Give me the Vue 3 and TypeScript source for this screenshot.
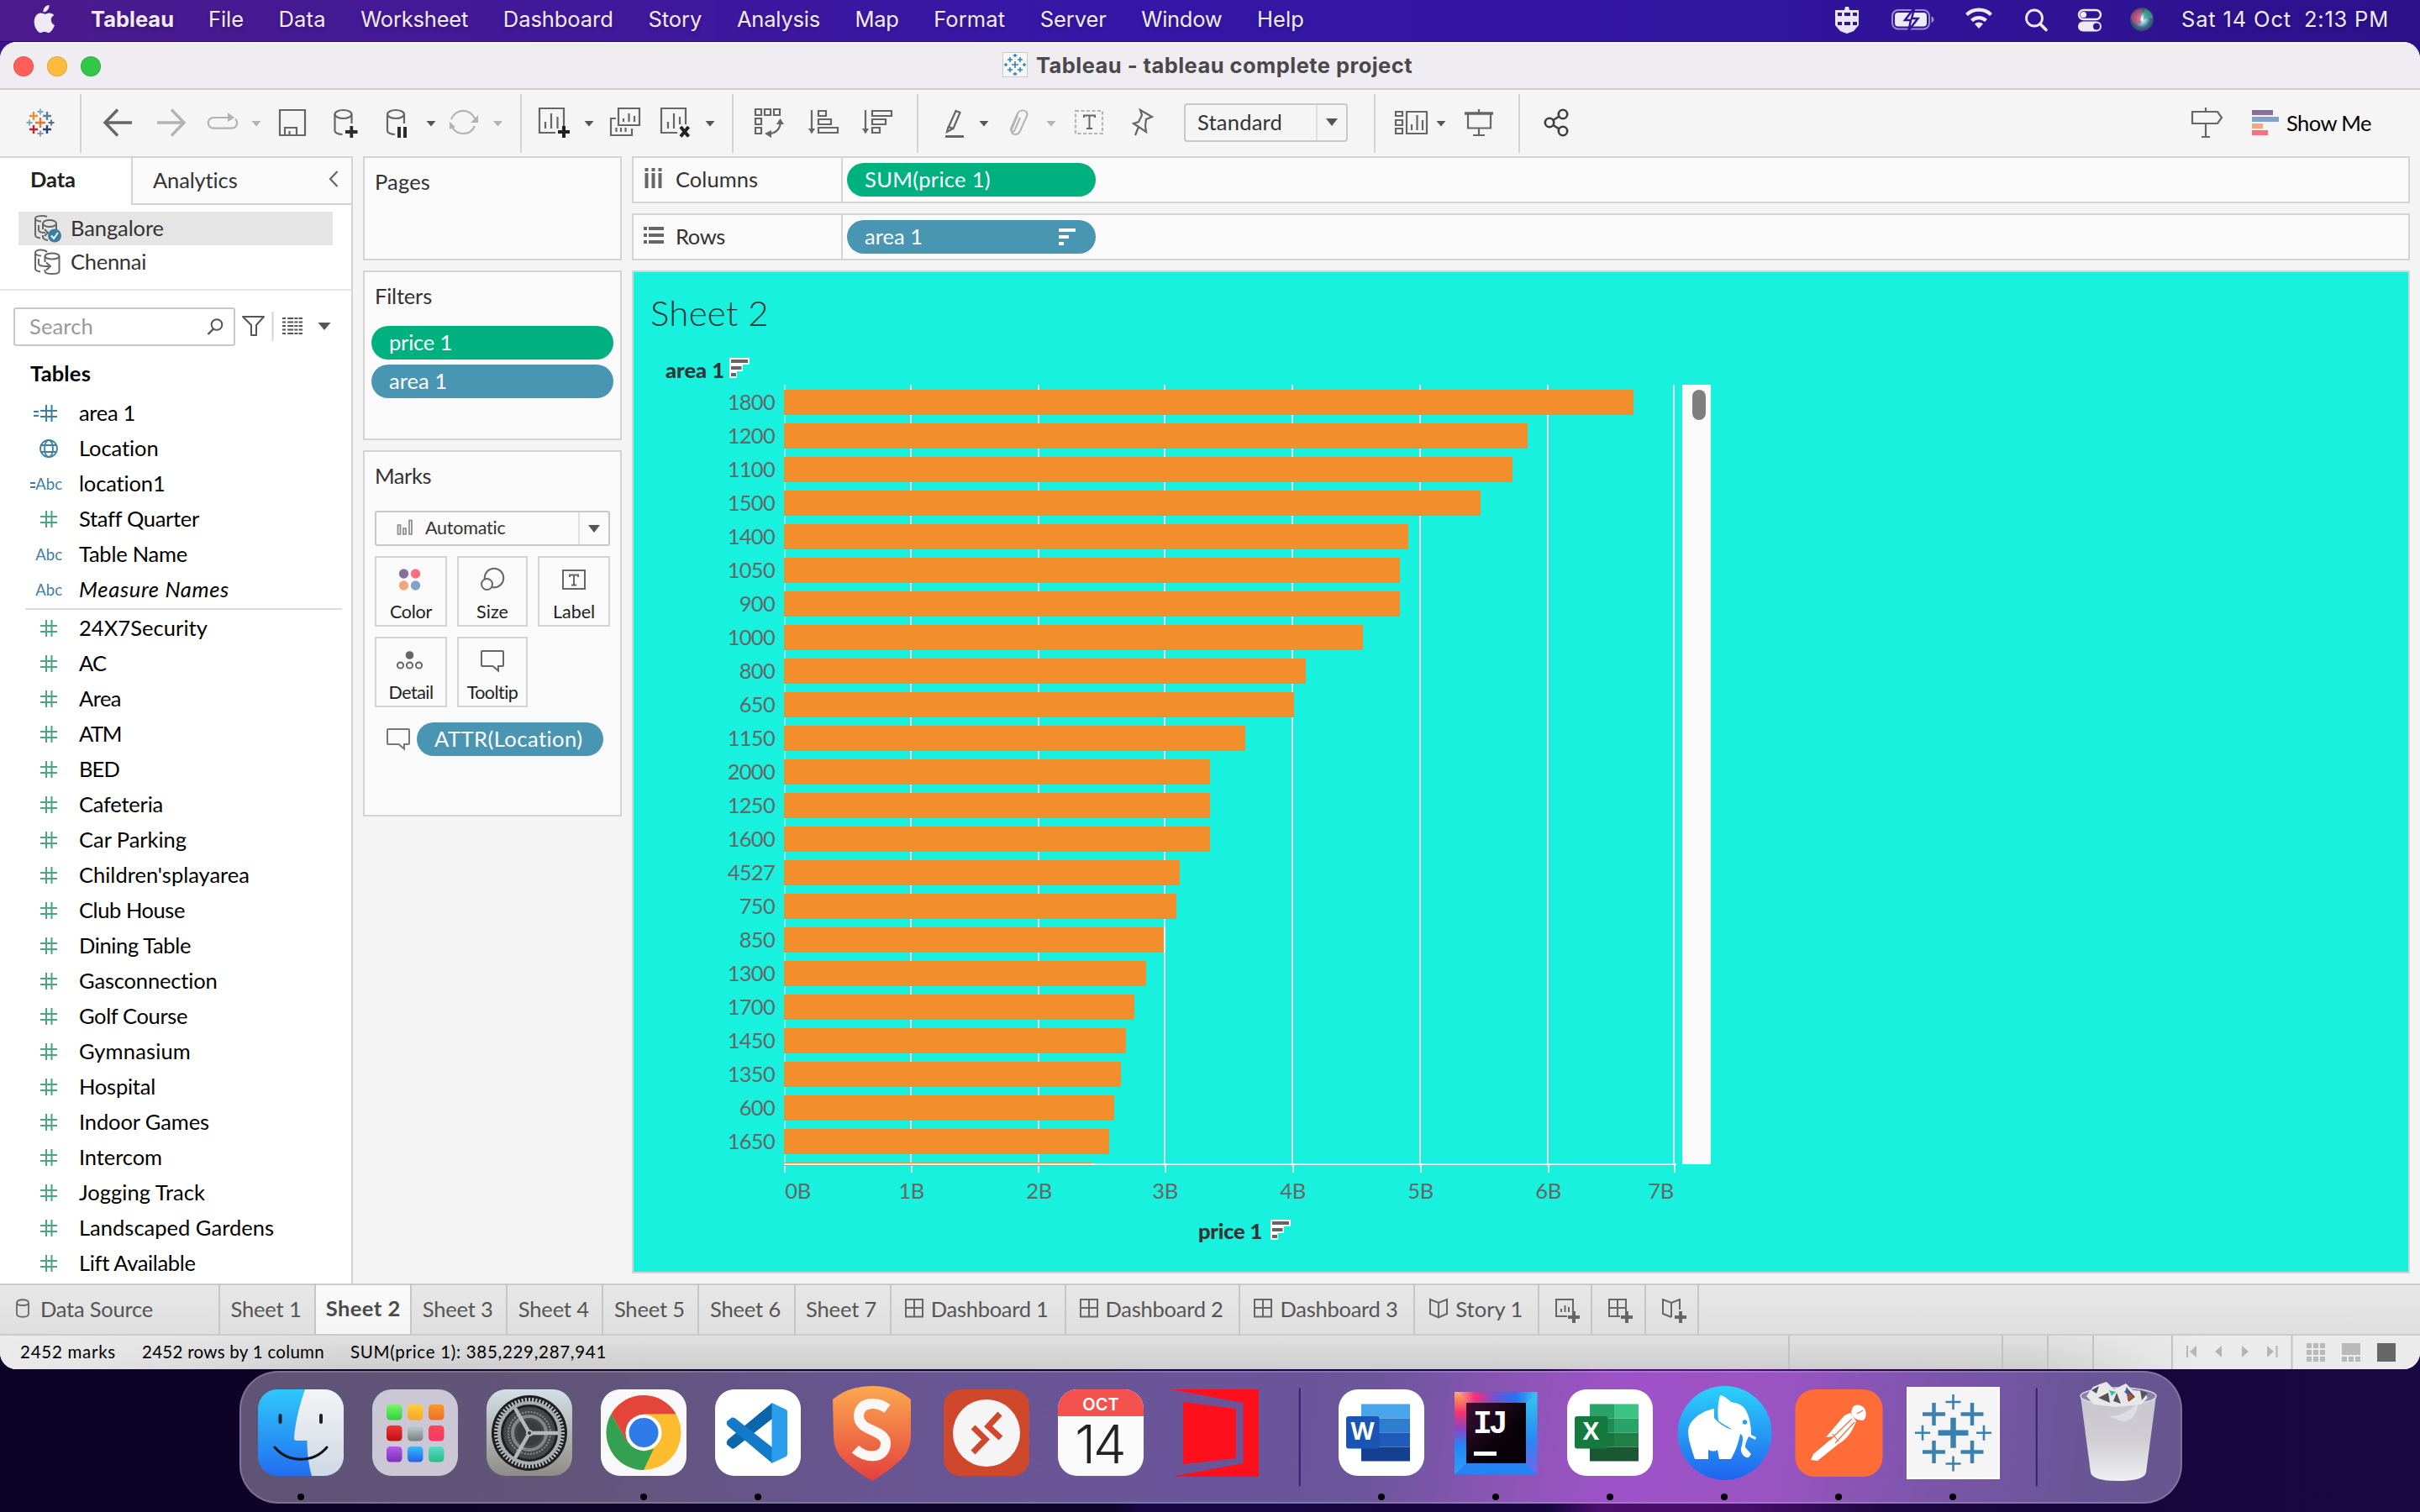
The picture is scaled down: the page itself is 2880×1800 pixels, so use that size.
<script setup lang="ts">
import type { Directive } from 'vue'

// Tracks a label's letters so that it occupies exactly the given width.
const vFit: Directive<HTMLElement, number> = {
  mounted(el, { value }) {
    const natural = el.getBoundingClientRect().width
    const count = (el.textContent ?? '').trim().length
    el.style.letterSpacing = `${(value - natural) / count}px`
  },
}

type Kind = 'calc-num' | 'globe' | 'calc-abc' | 'abc' | 'num'
interface Field { name: string; w: number; kind: Kind; italic?: boolean }
interface Label { text: string; w: number }

const menus: Label[] = [
  { text: 'File', w: 42 }, { text: 'Data', w: 56 }, { text: 'Worksheet', w: 128 },
  { text: 'Dashboard', w: 131 }, { text: 'Story', w: 64 }, { text: 'Analysis', w: 99 },
  { text: 'Map', w: 52 }, { text: 'Format', w: 85 }, { text: 'Server', w: 79 },
  { text: 'Window', w: 96 }, { text: 'Help', w: 56 },
]

const dimensions: Field[] = [
  { name: 'area 1', w: 67, kind: 'calc-num' },
  { name: 'Location', w: 95, kind: 'globe' },
  { name: 'location1', w: 103, kind: 'calc-abc' },
  { name: 'Staff Quarter', w: 142, kind: 'num' },
  { name: 'Table Name', w: 129, kind: 'abc' },
  { name: 'Measure Names', w: 179, kind: 'abc', italic: true },
]

const measures: Field[] = ([
  ['24X7Security', 153], ['AC', 32], ['Area', 50], ['ATM', 50], ['BED', 48], ['Cafeteria', 100],
  ['Car Parking', 128], ["Children'splayarea", 203], ['Club House', 126], ['Dining Table', 133],
  ['Gasconnection', 165], ['Golf Course', 129], ['Gymnasium', 133], ['Hospital', 91],
  ['Indoor Games', 155], ['Intercom', 99], ['Jogging Track', 150], ['Landscaped Gardens', 232],
  ['Lift Available', 138],
] as [string, number][]).map(([name, w]) => ({ name, w, kind: 'num' as Kind }))

const bars: { area: string; w: number }[] = [
  { area: '1800', w: 1011 }, { area: '1200', w: 885 }, { area: '1100', w: 867 }, { area: '1500', w: 829 },
  { area: '1400', w: 743 }, { area: '1050', w: 733 }, { area: '900', w: 733 }, { area: '1000', w: 689 },
  { area: '800', w: 621 }, { area: '650', w: 607 }, { area: '1150', w: 549 }, { area: '2000', w: 507 },
  { area: '1250', w: 507 }, { area: '1600', w: 507 }, { area: '4527', w: 471 }, { area: '750', w: 467 },
  { area: '850', w: 452 }, { area: '1300', w: 431 }, { area: '1700', w: 417 }, { area: '1450', w: 407 },
  { area: '1350', w: 401 }, { area: '600', w: 393 }, { area: '1650', w: 387 },
]
const gridX = [1, 151, 303, 453, 605, 757, 909, 1059]
const tickX = [1, 152, 303, 454, 606, 758, 910, 1060]
const axisX = [16, 151, 303, 453, 605, 757, 909, 1043]

const sheetTabs = ['Sheet 1', 'Sheet 2', 'Sheet 3', 'Sheet 4', 'Sheet 5', 'Sheet 6', 'Sheet 7']
const dashboards = ['Dashboard 1', 'Dashboard 2', 'Dashboard 3']

const launchpad: [string, string][] = [
  ['#78f56c', '#2fd03a'], ['#fdcf3c', '#f9a524'], ['#f79a2c', '#ee6f26'],
  ['#f0372f', '#bf0f18'], ['#c4cfd4', '#7a7d7c'], ['#fa4a56', '#fb3568'],
  ['#b35be8', '#7c2ebd'], ['#33bdfa', '#2560ee'], ['#5adcc6', '#25bd85'],
]
const wordStrips = ['#47a5ea', '#2f7dcf', '#1e5bbb', '#14408f']
const excelStrips = [['#2aa369', '#3bc484'], ['#218c56', '#2aa369'], ['#197640', '#218048'], ['#1b5733', '#1b5733']]
const teeth = Array.from({ length: 60 }, (_, i) => i * 6)
const crosses: [number, number, number, number][] = [
  [68.5, 73.7, 18, 6.5], [45.5, 51.5, 13.5, 4.5], [91, 51.5, 13.5, 4.5], [45.5, 96.5, 13.5, 4.5],
  [91, 96.5, 13.5, 4.5], [68.5, 37, 9, 2.6], [68.5, 110.5, 9, 2.6], [32, 73.7, 9, 2.6], [105, 73.7, 9, 2.6],
]
const logo: [number, number, number, string][] = [
  [48, 146, 6, '#e8762d'], [40, 138, 5, '#eb9129'], [56, 138, 5, '#4f8598'], [40, 154, 5, '#c72035'],
  [56, 154, 5, '#1f447e'], [48, 133, 3.5, '#7ba6b4'], [48, 159, 3.5, '#8e8fb8'], [35, 146, 3.5, '#7ba6b4'],
  [61, 146, 3.5, '#5b6591'],
]
</script>

<template>
  <div class="desktop">
    <header class="menubar">
      <svg class="apple" width="28" height="34" viewBox="0 0 28 34">
        <path fill="#f0eaf6" d="M19.5 0c.3 2.600-.8 4.800-2.200 6.300-1.400 1.500-3.200 2.300-4.900 2.200-.2-2.500.9-4.800 2.300-6.200C16.100.9 18 .1 19.500 0zM25.300 12c-2.400 1.500-3.600 3.300-3.500 5.800.1 2.900 1.600 5 4.200 6.200-.7 2-1.700 4-3 5.700-1.300 1.800-2.600 3.200-4.500 3.200-1.900 0-2.500-1.100-4.600-1.100-2.200 0-2.900 1.100-4.600 1.100-2 0-3.400-1.700-4.800-3.700C1.500 24.800.5 17.600 3.500 13.200c1.400-2.200 3.700-3.600 6-3.600 2.100 0 3.400 1.200 5.100 1.200 1.600 0 2.800-1.200 5.200-1.200 2.100 0 4.200 1 5.500 2.400z" />
      </svg>
      <b v-fit="99" class="app">Tableau</b>
      <span v-for="m in menus" :key="m.text" v-fit="m.w" class="menu">{{ m.text }}</span>
      <svg class="tray" width="420" height="50" viewBox="2170 0 420 50">
        <path d="M2185 13h11l1-4h4l1 4h11v18l-6 7-8 3-8-3-6-7z" fill="#e9e4f6" />
        <path d="M2188 16h5v4h-5zM2196 16h7v4h-7zM2206 16h5v4h-5zM2188 27h5v4h-5zM2196 27h7v4h-7zM2206 27h5v4h-5z" fill="#2e1594" />
        <rect x="2253" y="13" width="44" height="22.500" rx="7" fill="none" stroke="#9c8cce" stroke-width="2" />
        <rect x="2256" y="16" width="38" height="16.500" rx="4" fill="#eeeaf8" />
        <path d="M2299.500 20.500c4 1 4 6.500 0 7.500z" fill="#9c8cce" />
        <path d="M2278 12l-10 13h7l-2.500 12 11-14h-7.500l3-11z" fill="#eeeaf8" stroke="#2f1499" stroke-width="2.500" />
        <g fill="none" stroke="#eeeaf8" stroke-width="4.200">
          <path d="M2341.500 18.500a21 21 0 0 1 29 0" /><path d="M2347.500 25.500a12.500 12.500 0 0 1 17 0" />
        </g>
        <path d="M2351 29.500a7.500 7.500 0 0 1 10 0l-5 5.500z" fill="#eeeaf8" />
        <circle cx="2422" cy="22.500" r="9.500" fill="none" stroke="#eeeaf8" stroke-width="2.800" />
        <path d="M2429 29.500l7 7" stroke="#eeeaf8" stroke-width="3.600" stroke-linecap="round" />
        <rect x="2475" y="13" width="26" height="11" rx="5.500" fill="none" stroke="#eeeaf8" stroke-width="2.400" />
        <circle cx="2480.500" cy="18.500" r="3.600" fill="#eeeaf8" />
        <rect x="2474" y="26.500" width="28" height="12" rx="6" fill="#eeeaf8" />
        <circle cx="2496" cy="32.500" r="4" fill="#2f1499" />
        <defs>
          <radialGradient id="siri"><stop offset="0" stop-color="#fff" /><stop offset=".3" stop-color="#9fd6ea" /><stop offset=".7" stop-color="#3b6b8c" /><stop offset="1" stop-color="#3b4a68" /></radialGradient>
        </defs>
        <circle cx="2550" cy="24" r="14" fill="url(#siri)" />
        <path d="M2537 21c3-7 10-10 14-8-2 8-4 12-1 14-5 5-11 3-13-6z" fill="#d8406f" opacity=".7" />
        <path d="M2553 12c6 1 10 6 10 11-4-1-9-1-11 2z" fill="#3aa57f" opacity=".7" />
      </svg>
      <span v-fit="131" class="clock first">Sat 14 Oct</span><span v-fit="101" class="clock">2:13 PM</span>
    </header>

    <main class="window">
      <div class="titlebar">
        <i class="light red" /><i class="light yellow" /><i class="light green" />
        <div class="title">
          <svg width="31" height="31" viewBox="0 0 31 31">
            <rect x=".5" y=".5" width="29" height="29" fill="#f8f8f8" stroke="#c9c8cb" />
            <g stroke="#3a82b0" stroke-width="1.600">
              <path d="M11 15h8M15 11v8M6 9h6M9 6v6M18 9h6M21 6v6M6 21h6M9 18v6M18 21h6M21 18v6M12.500 4h5M15 2v4M12.500 26h5M15 24v4M2 15h4M4 13v4M24 15h4M26 13v4" />
            </g>
          </svg>
          <b v-fit="448">Tableau - tableau complete project</b>
        </div>
      </div>

      <div class="toolbar">
        <svg class="grp" width="95" height="70" viewBox="0 112 95 70">
          <path v-for="(l, i) in logo" :key="i" :d="`M${l[0] - l[2]} ${l[1]}h${l[2] * 2}M${l[0]} ${l[1] - l[2]}v${l[2] * 2}`" :stroke="l[3]" :stroke-width="l[2] > 4 ? 2.4 : 1.8" />
        </svg>
        <svg class="grp" width="524" height="70" viewBox="95 112 524 70">
          <g fill="none" stroke="#666" stroke-width="3.400"><path d="M157 146h-32M140 130.500L125 146l15 15.500" /><path stroke="#b3b3b3" d="M187 146h32M204 130.500L219 146l-15 15.500" /></g>
          <g fill="none" stroke="#b3b3b3" stroke-width="2.200"><path d="M274 140h-20a6.300 6.300 0 0 0 0 12.600h22a6.300 6.300 0 0 0 4-11" /></g>
          <path d="M271 134l8 6-8 5z" fill="#b3b3b3" />
          <path d="M299.500 144h11l-5.500 6.500zM587 144h11l-5.500 6.500z" fill="#b3b3b3" /><path d="M507.500 144h11l-5.500 6.500z" fill="#555" />
          <g fill="none" stroke="#666" stroke-width="2.200">
            <path d="M333 131h30v30h-30zM339 161v-9h14v9M344.500 161v-5" />
            <ellipse cx="408.500" cy="136" rx="10" ry="5" /><path d="M398.500 136v20c0 2 4 4 9 4M418.500 136v11" />
            <ellipse cx="471" cy="136" rx="10" ry="5" /><path d="M461 136v20c0 2 4 4 9 4M481 136v11" />
          </g>
          <path d="M411 157h14.500M418.300 150v14" stroke="#2c2c2c" stroke-width="3.800" />
          <path d="M475 151v13M482 151v13" stroke="#2c2c2c" stroke-width="4" />
          <g fill="none" stroke="#b3b3b3" stroke-width="2.200"><path d="M537 142a15 15 0 0 1 28-1M565 150a15 15 0 0 1-27 1" /></g>
          <path d="M569 137v9h-9zM535 154v-9l7 6z" fill="#b3b3b3" />
        </svg>
        <svg class="grp" width="252" height="70" viewBox="619 112 252 70">
          <g fill="none" stroke="#666" stroke-width="2.200">
            <path d="M661 158h-19v-29h29v21M649 153v-8M656 153v-18M663.500 153v-14" />
            <path d="M736 129h25v20h-25zM742 145v-4M748.500 145v-10M755 145v-7M733 141h-6v20h25v-8M733.500 157v-5M739 157v-5M744.500 157v-5" />
            <path d="M806 158h-19v-29h29v19M795 153v-8M802 153v-18M809 148v-9" />
          </g>
          <path d="M664 157h14M671 150v14" stroke="#222" stroke-width="4" /><path d="M810 151l9.500 11.500M819.500 151L810 162.500" stroke="#222" stroke-width="4" />
          <path d="M695.500 144h11l-5.500 6.500zM839.500 144h11l-5.500 6.500z" fill="#555" />
        </svg>
        <svg class="grp" width="220" height="70" viewBox="871 112 220 70">
          <g fill="none" stroke="#666" stroke-width="2.200">
            <path d="M899 130h7v7h-7zM910 130h7v7h-7zM921 130h7v7h-7zM899 141h7v7h-7zM899 152h7v7h-7z" />
            <path d="M929 144c0 9-4 14-14 15.500M966 131v25M974 132h9v6h-9zM974 142h15v6h-15zM974 152h23v6h-23z" />
            <path d="M1030 131v25M1038 132h23v6h-23zM1038 142h16v6h-16zM1038 152h9v6h-9z" />
          </g>
          <path d="M924 148l4.500-7 4.500 7zM918 155l-8 4 8 5zM962 153h8l-4 6.500zM1026 153h8l-4 6.500z" fill="#666" />
        </svg>
        <svg class="grp open" width="318" height="70" viewBox="1091 112 318 70">
          <g fill="none" stroke="#666" stroke-width="2.200">
            <path d="M1129 151l8.500-19 5 2-8 19zM1128.500 151l-1.500 6 7-4" /><path stroke-width="3" d="M1125 162.500h22" />
            <path stroke="#b3b3b3" stroke-width="2" d="M1214 140l-6 14c-1 4-6 3-5-1l8-18c3-6 14-4 11 3l-8 18c-3 6-12 5-10-2l7-17" />
            <path d="M1357 131l14 8-7 3-1 8 1 7-15-10 6-2 4-8zM1355 151l-4 10" />
          </g>
          <rect x="1280" y="132" width="32" height="27" fill="none" stroke="#b3b3b3" stroke-width="2.200" stroke-dasharray="4 2.500" />
          <path d="M1290 140v-2.500h13v2.500M1296.500 138v15M1293 153h7" stroke="#666" stroke-width="2" fill="none" />
          <path d="M1165.500 144h11l-5.500 6.500z" fill="#555" /><path d="M1245.500 144h11l-5.500 6.500z" fill="#b3b3b3" />
        </svg>
        <div class="select"><span v-fit="101">Standard</span><i /><svg width="14" height="9"><path d="M0 0h14L7 9z" fill="#555" /></svg></div>
        <svg class="grp" width="31" height="70" />
        <svg class="grp" width="172" height="70" viewBox="1635 112 172 70">
          <g fill="none" stroke="#666" stroke-width="2.200">
            <path d="M1661 133h8v5h-8zM1661 143h8v6h-8zM1661 153h8v6h-8zM1674 133h24v26h-24zM1680 155v-7M1686.500 155v-18M1693 155v-12" />
            <path d="M1747 135v17.500h27V135M1760 130v4M1760 153v9M1753 161h14" /><path stroke-width="3.400" d="M1743 135h34" />
          </g>
          <path d="M1709.500 144h11l-5.500 6.500z" fill="#555" />
        </svg>
        <svg class="grp open" width="93" height="70" viewBox="1807 112 93 70">
          <g fill="none" stroke="#3d3d3d" stroke-width="2.600"><circle cx="1844" cy="146" r="5.200" /><circle cx="1860" cy="136" r="5.200" /><circle cx="1860" cy="156" r="5.200" /><path d="M1848.500 143l7-4.500M1848.500 149l7 4.500" /></g>
        </svg>
        <svg class="showme-icons" width="112" height="70" viewBox="2605 112 112 70">
          <g fill="none" stroke="#666" stroke-width="2.200"><path d="M2609 133h30l5 7-5 7h-30zM2625 128v5M2625 147v16M2620 163h10" /></g>
          <path fill="#866f99" d="M2680 131h25v6h-25z" /><path fill="#80a3cb" d="M2680 139h32v6h-32z" /><path fill="#f3a67c" d="M2680 147h13v6h-13z" /><path fill="#f86f80" d="M2680 155h19v6h-19z" />
        </svg>
        <span v-fit="101" class="showme">Show Me</span>
      </div>

      <div class="workspace">
        <aside class="data">
          <div class="data-tabs">
            <div class="tab active"><b v-fit="54">Data</b></div>
            <div class="tab analytics"><span v-fit="101">Analytics</span><svg width="12" height="20" viewBox="0 0 12 20"><path d="M10.500 1L2 10l8.500 9" fill="none" stroke="#666" stroke-width="2.200" /></svg></div>
          </div>
          <div class="sources">
            <div class="source on">
              <svg width="34" height="34" viewBox="0 0 34 34"><g fill="none" stroke="#666" stroke-width="2"><path d="M16 3C12 1 2 2 2 5v20c0 2 3 3 6 3.500M2 5.500C2 7 6 8.500 9 8.500" /><ellipse cx="19" cy="11" rx="8" ry="4" /><path d="M11 11v7M27 11v8M6 13v6c0 2 2 3 8 3M13 18l4 4-4 4M11 25v2c0 2 3 4 6 4" /></g><circle cx="25" cy="25.500" r="8" fill="#3a7ea3" /><path d="M21 25.500l3 3.500 5-7" stroke="#fff" stroke-width="2" fill="none" /></svg>
              <span v-fit="111">Bangalore</span>
            </div>
            <div class="source">
              <svg width="34" height="34" viewBox="0 0 34 34"><g fill="none" stroke="#666" stroke-width="2"><path d="M16 5C12 1 2 2 2 6v19c0 2 3 3 6 3.500M2 6.500C2 8 6 9.500 9 9.500" /><ellipse cx="22" cy="10" rx="8.500" ry="3.500" /><path d="M13.500 10v7M30.500 10v18c0 4-17 4-17 0v-2M6 13v6c0 2 2 3 12 3M15 17.500l5 4.500-5 4.500" /></g></svg>
              <span v-fit="90">Chennai</span>
            </div>
          </div>
          <div class="searchrow">
            <div class="search"><span v-fit="76">Search</span><svg width="20" height="20" viewBox="0 0 20 20"><circle cx="12" cy="7.500" r="6.300" fill="none" stroke="#555" stroke-width="2" /><path d="M8 12.500L1.500 19" stroke="#555" stroke-width="2.400" /></svg></div>
            <svg width="120" height="40" viewBox="280 369 120 40">
              <path d="M289 377h25l-9 10v12h-6v-12z" fill="none" stroke="#555" stroke-width="2" stroke-linejoin="round" />
              <path d="M324.500 371v35" stroke="#d4d4d4" stroke-width="2" />
              <path d="M336 379h24M336 383.500h24M336 388h24M336 392.500h24M336 397h24" stroke="#555" stroke-width="2.200" stroke-dasharray="4 2.200 7 1.200 4 1.200 7 0" />
              <path d="M378.500 384h15l-7.500 9z" fill="#555" />
            </svg>
          </div>
          <b v-fit="72" class="tables">Tables</b>
          <template v-for="(group, g) in [dimensions, measures]" :key="g">
            <div v-if="g === 1" class="rule" />
            <div v-for="f in group" :key="f.name" class="field">
              <svg v-if="f.kind === 'num'" class="fi" width="40" height="24"><path d="M14 9h20M14 16h20M21 2v20M27.500 2v20" stroke="#48a684" stroke-width="2" /></svg>
              <svg v-else-if="f.kind === 'calc-num'" class="fi" width="40" height="24"><path d="M14 9h20M14 16h20M21 2v20M27.500 2v20M6 10h6M6 15h6" stroke="#3a7ea3" stroke-width="2" /></svg>
              <svg v-else-if="f.kind === 'globe'" class="fi" width="40" height="24"><g fill="none" stroke="#3f80a4" stroke-width="1.800"><circle cx="24" cy="12" r="10" /><ellipse cx="24" cy="12" rx="5" ry="10" /><path d="M15 8h18M15 16h18" /></g></svg>
              <span v-else class="fi abc"><svg v-if="f.kind === 'calc-abc'" width="6" height="18"><path d="M0 8h6M0 13h6" stroke="#3a7ea3" stroke-width="2" /></svg>Abc</span>
              <span v-fit="f.w" class="fname" :class="{ it: f.italic }">{{ f.name }}</span>
            </div>
          </template>
        </aside>

        <div class="cards">
          <section class="card pages"><h3 v-fit="66">Pages</h3></section>
          <section class="card filters">
            <h3 v-fit="68">Filters</h3>
            <div class="pill green"><span v-fit="75">price 1</span></div>
            <div class="pill blue"><span v-fit="69">area 1</span></div>
          </section>
          <section class="card marks">
            <h3 v-fit="67">Marks</h3>
            <div class="marktype">
              <svg width="20" height="20" viewBox="0 0 20 20"><g fill="none" stroke="#888" stroke-width="1.700"><path d="M1.500 7h3v11h-3zM8 11h3v7H8zM15 1.500h3V18h-3z" /></g></svg>
              <span v-fit="96">Automatic</span><i /><svg width="14" height="9"><path d="M0 0h14L7 9z" fill="#555" /></svg>
            </div>
            <div class="markgrid">
              <div class="mark"><svg width="40" height="30" viewBox="0 0 40 30"><circle cx="11.500" cy="8" r="5.700" fill="#866f99" /><circle cx="25.500" cy="8" r="5.700" fill="#f86f80" /><circle cx="11.500" cy="22" r="5.700" fill="#f3a67c" /><circle cx="25.500" cy="22" r="5.700" fill="#80a3cb" /></svg><span v-fit="50">Color</span></div>
              <div class="mark"><svg width="40" height="30" viewBox="0 0 40 30"><g fill="#fafafa" stroke="#666" stroke-width="2"><circle cx="22" cy="13" r="11.300" /><circle cx="13.500" cy="20.500" r="6.500" /></g></svg><span v-fit="38">Size</span></div>
              <div class="mark"><svg width="40" height="30" viewBox="0 0 40 30"><path d="M7 4h26v22H7zM15 12V9.500h10V12M20 10v11.500M17 21.500h6" fill="none" stroke="#666" stroke-width="2" /></svg><span v-fit="50">Label</span></div>
              <div class="mark"><svg width="40" height="30" viewBox="0 0 40 30"><circle cx="18.500" cy="9" r="4.800" fill="#666" /><g fill="none" stroke="#666" stroke-width="2"><circle cx="7.500" cy="21" r="3.600" /><circle cx="18.500" cy="21" r="3.600" /><circle cx="29.500" cy="21" r="3.600" /></g></svg><span v-fit="53">Detail</span></div>
              <div class="mark"><svg width="40" height="30" viewBox="0 0 40 30"><path d="M8 4h24q1 0 1 1v16q0 1-1 1h-5v5.500L20.500 22H8q-1 0-1-1V5q0-1 1-1z" fill="none" stroke="#666" stroke-width="2" /></svg><span v-fit="61">Tooltip</span></div>
            </div>
            <div class="encoding">
              <svg width="28" height="28" viewBox="6 2 28 28"><path d="M8 4h24q1 0 1 1v16q0 1-1 1h-5v5.500L20.500 22H8q-1 0-1-1V5q0-1 1-1z" fill="none" stroke="#777" stroke-width="2" /></svg>
              <div class="pill blue"><span v-fit="177">ATTR(Location)</span></div>
            </div>
          </section>
        </div>

        <div class="stage">
          <div class="shelf">
            <div class="shelf-name"><svg width="24" height="24"><path d="M3.500 0v4M11.500 0v4M19.500 0v4M3.500 6v18M11.500 6v18M19.500 6v18" stroke="#666" stroke-width="4" /></svg><span v-fit="98">Columns</span></div>
            <div class="pill green"><span v-fit="150">SUM(price 1)</span></div>
          </div>
          <div class="shelf">
            <div class="shelf-name"><svg width="24" height="24"><path d="M0 4h4M0 12h4M0 20h4M6 4h18M6 12h18M6 20h18" stroke="#666" stroke-width="4" /></svg><span v-fit="59">Rows</span></div>
            <div class="pill blue"><span v-fit="69">area 1</span><svg width="20" height="20"><path d="M0 2h20M0 10h12M0 18h6" stroke="#fff" stroke-width="4" /></svg></div>
          </div>
          <section class="view">
            <h2 v-fit="141">Sheet 2</h2>
            <div class="dim"><b v-fit="70">area 1</b><svg width="24" height="25"><path d="M0 0h24v8h-8v8h-7v8H0z" fill="#fff" /><path d="M2 4h20M2 12h12.500M2 20h6" stroke="#666" stroke-width="4" /></svg></div>
            <div class="chart">
              <div class="rowlabels"><span v-for="b in bars" :key="b.area">{{ b.area }}</span></div>
              <div class="plot">
                <svg class="gridlines" width="1062" height="940"><path v-for="(x, i) in gridX" :key="i" :d="`M${x} 0V928`" stroke="#f3f3f3" :stroke-width="i === 0 ? 1 : 2" /><path v-for="x in tickX" :key="`t${x}`" :d="`M${x} 928V938`" stroke="#f3f3f3" stroke-width="2" /></svg>
                <div class="bars">
                  <div v-for="b in bars" :key="b.area" class="bar" :style="{ width: b.w + 'px' }" />
                  <div class="bar partial" />
                </div>
                <svg class="axisline" width="1062" height="2"><path d="M0 1h1062" stroke="#f3f3f3" stroke-width="2" /></svg>
              </div>
              <div class="scroll"><i /></div>
            </div>
            <svg class="axis" width="1090" height="40"><text v-for="(x, i) in axisX" :key="i" :x="x + 10.5" y="24" text-anchor="middle">{{ i }}B</text></svg>
            <div class="measure"><b v-fit="76">price 1</b><svg width="24" height="25"><path d="M0 0h24v8h-8v8h-7v8H0z" fill="#fff" /><path d="M2 4h20M2 12h12.500M2 20h6" stroke="#666" stroke-width="4" /></svg></div>
          </section>
        </div>
      </div>

      <nav class="sheets">
        <div class="st source-tab"><svg width="17" height="23" viewBox="0 0 17 23"><path d="M1 5v13c0 5 14 5 14 0V5c0-5-14-5-14 0c0 4 14 4 14 0" fill="none" stroke="#666" stroke-width="1.800" /></svg><span v-fit="134">Data Source</span></div>
        <div v-for="s in sheetTabs" :key="s" class="st sheet" :class="{ sel: s === 'Sheet 2' }"><span v-fit="s === 'Sheet 2' ? 89 : 84">{{ s }}</span></div>
        <div v-for="d in dashboards" :key="d" class="st dash"><svg width="22" height="23" viewBox="0 0 22 23"><path d="M1 1h20v20.500H1zM11 1v20.500M1 11h20" fill="none" stroke="#666" stroke-width="2" /></svg><span v-fit="140">{{ d }}</span></div>
        <div class="st story"><svg width="22" height="25" viewBox="0 0 22 25"><path d="M1 2l10 4 10-4v17l-10 4.500L1 19zM11 6v17" fill="none" stroke="#666" stroke-width="2" /></svg><span v-fit="80">Story 1</span></div>
        <div class="st add"><svg width="30" height="30"><path d="M14 21H1V1h20v14M7 16v-4M11.500 16V8M16 16v-6" fill="none" stroke="#666" stroke-width="2" /><path d="M15 22h14M22 15v14" stroke="#666" stroke-width="4" /></svg></div>
        <div class="st add"><svg width="30" height="30"><path d="M14 21H1V1h20v14M11 1v20M1 11h20" fill="none" stroke="#666" stroke-width="2" /><path d="M15 22h14M22 15v14" stroke="#666" stroke-width="4" /></svg></div>
        <div class="st add"><svg width="30" height="30"><path d="M11 22L1 18V1l10 4 10-4v12M11 5v17" fill="none" stroke="#666" stroke-width="2" /><path d="M15 22h14M22 15v14" stroke="#666" stroke-width="4" /></svg></div>
      </nav>
      <footer class="status">
        <span v-fit="114">2452 marks</span><span v-fit="217">2452 rows by 1 column</span><span v-fit="305">SUM(price 1): 385,229,287,941</span>
        <svg width="752" height="40" viewBox="2128 1590 752 40">
          <path d="M2129 1590v40M2383 1590v40M2437 1590v40M2491 1590v40M2585 1590v40M2727.500 1590v40" stroke="#c2c2c2" stroke-width="2" />
          <path d="M2614 1602v14l-8-7zM2644 1602v14l-8-7zM2668 1602v14l8-7zM2698 1602v14l8-7z" fill="#b5b5b5" />
          <path d="M2603 1602v14M2709.500 1602v14" stroke="#b5b5b5" stroke-width="2" />
          <path d="M2745 1599h6v6h-6zM2753 1599h6v6h-6zM2761 1599h6v6h-6zM2745 1607h6v6h-6zM2753 1607h6v6h-6zM2761 1607h6v6h-6zM2745 1615h6v6h-6zM2753 1615h6v6h-6zM2761 1615h6v6h-6zM2787 1599h22v14h-22zM2787 1615h6v6h-6zM2795 1615h6v6h-6zM2803 1615h6v6h-6z" fill="#b9b9b9" />
          <path d="M2829 1599h22v22h-22z" fill="#666" />
        </svg>
      </footer>
    </main>

    <div class="dock">
      <svg class="app-icon" viewBox="0 0 136 158">
        <defs>
          <clipPath id="tile"><rect x="17" y="22" width="102" height="103" rx="23" /></clipPath>
          <linearGradient id="fb" x2="0" y2="1"><stop stop-color="#2fc8fb" /><stop offset="1" stop-color="#226ef0" /></linearGradient>
          <linearGradient id="fw" x2="0" y2="1"><stop stop-color="#f4f4f6" /><stop offset="1" stop-color="#cfd8e4" /></linearGradient>
        </defs>
        <g clip-path="url(#tile)"><path fill="url(#fb)" d="M17 22h102v103H17z" /><path fill="url(#fw)" d="M73 22C65 45 61 65 60 80q0 3 3 3h12.500c0 15 2 30 5.500 42h38V22z" /></g>
        <path d="M43.500 53v8M92 53v8" stroke="#16222e" stroke-width="4" stroke-linecap="round" />
        <path d="M37 91c16 19 46 19 62 0" fill="none" stroke="#10151c" stroke-width="3" stroke-linecap="round" />
        <circle cx="68" cy="150" r="4" />
      </svg>
      <svg class="app-icon" viewBox="0 0 136 158">
        <defs><linearGradient v-for="(c, i) in launchpad" :id="`lp${i}`" :key="i" x2="0" y2="1"><stop :stop-color="c[0]" /><stop offset="1" :stop-color="c[1]" /></linearGradient></defs>
        <rect x="17" y="22" width="102" height="103" rx="23" fill="#cbc7d5" />
        <rect v-for="(c, i) in launchpad" :key="i" :x="34 + (i % 3) * 25" :y="40 + Math.floor(i / 3) * 25" width="18.500" height="18.500" rx="4.500" :fill="`url(#lp${i})`" />
      </svg>
      <svg class="app-icon" viewBox="0 0 136 158">
        <defs><linearGradient id="sg" x2="0" y2="1"><stop stop-color="#d3e0e6" /><stop offset="1" stop-color="#8f8c86" /></linearGradient></defs>
        <rect x="17" y="22" width="102" height="103" rx="23" fill="url(#sg)" />
        <circle cx="68" cy="74" r="45" fill="#1e1f20" />
        <g transform="translate(68 74)">
          <path v-for="t in teeth" :key="t" d="M0-42v5" stroke="#b9bdbf" stroke-width="2.200" :transform="`rotate(${t})`" />
          <circle r="36" fill="none" stroke="#a9adaf" stroke-width="4" />
          <circle r="31" fill="#45474a" /><circle r="25" fill="none" stroke="#8b8f92" stroke-width="2" stroke-dasharray="2 1.600" /><circle r="20" fill="none" stroke="#83878a" stroke-width="4" /><circle r="15" fill="#3a3c3e" />
          <path d="M0 0h34M0 0l-17-29.500M0 0l-17 29.500" stroke="#b4b8ba" stroke-width="4.500" /><circle r="4" fill="#b4b8ba" /><circle r="2" fill="#333" />
        </g>
      </svg>
      <svg class="app-icon" viewBox="0 0 136 158">
        <rect x="17" y="22" width="102" height="103" rx="23" fill="#f8f8fa" />
        <circle cx="68" cy="73.500" r="44.500" fill="#fbbc2e" />
        <path d="M68 118A44.500 44.500 0 0 1 29.500 51.200L48.700 84.700 68 95.800l12-3z" fill="#34a152" />
        <path d="M29.500 51.200L48.700 84.700 68 73.500 68 51.200H106.500A44.500 44.500 0 0 0 29.500 51.200z" fill="#e4453a" />
        <circle cx="68" cy="73.500" r="21.500" fill="#fff" /><circle cx="68" cy="73.500" r="17.500" fill="#2f7bea" />
        <circle cx="68" cy="150" r="4" />
      </svg>
      <svg class="app-icon" viewBox="0 0 136 158">
        <rect x="17" y="22" width="102" height="103" rx="23" fill="#fff" />
        <path d="M31 87.500l6 5q2 .5 4-1L85 57V38L32 82q-2 3-1 5.500z" fill="#0b65a9" />
        <path d="M31 60l6-4.500q2-.5 4 1L85 91v19L32 65.500q-2-3-1-5.500z" fill="#127bc9" />
        <path d="M84.500 38l17 8q1.500 1 1.500 3v50q0 2-1.500 3l-17 8z" fill="#2a9ded" />
        <circle cx="68" cy="150" r="4" />
      </svg>
      <svg class="app-icon" viewBox="0 0 136 158">
        <defs><linearGradient id="ss" x2="0" y2="1"><stop stop-color="#fca84f" /><stop offset="1" stop-color="#e4403f" /></linearGradient></defs>
        <path d="M21 34Q40 18 68 18t46 16v42q0 18-10 28-18 17-36 27-19-10-36-27Q22 94 22 76z" fill="url(#ss)" />
        <path d="M86 45C74 36 53 36 52 53c-1 20 33 16 32 34-1 19-25 17-36 6" fill="none" stroke="#fbf7f4" stroke-width="12" />
      </svg>
      <svg class="app-icon" viewBox="0 0 136 158">
        <rect x="17" y="22" width="102" height="103" rx="20" fill="#d0482c" /><circle cx="68" cy="74" r="40" fill="#f5f5f5" />
        <path d="M52 67l15 14.500L52 97M84 51L70 66l15 14" fill="none" stroke="#d0482c" stroke-width="7" />
      </svg>
      <svg class="app-icon" viewBox="0 0 136 158">
        <g clip-path="url(#tile)"><path fill="#fafafa" d="M17 22h102v103H17z" /><path fill="#f4524e" d="M17 22h102v32H17z" /></g>
        <text x="68" y="46.500" class="cal-month">OCT</text><text x="66.500" y="110" class="cal-day">14</text>
      </svg>
      <svg class="app-icon" viewBox="0 0 136 158"><path d="M15.500 22H120v104H15.500l86-16V38zM30 37l63 8v59l-63 7z" fill="#fd101c" /></svg>
      <svg class="sep" viewBox="0 0 62 158"><path d="M33 20v118" stroke="#3a2070" stroke-width="2" /></svg>
      <svg class="app-icon" viewBox="0 0 136 158">
        <rect x="17" y="22" width="102" height="103" rx="23" fill="#fff" />
        <rect v-for="(c, i) in wordStrips" :key="c" x="44" :y="39.500 + i * 17" width="58" height="17" :fill="c" />
        <rect x="26" y="54" width="39.500" height="38.500" rx="3" fill="#1a55b4" /><text x="45.500" y="82" class="office">W</text>
        <circle cx="68" cy="150" r="4" />
      </svg>
      <svg class="app-icon" viewBox="0 0 136 158">
        <defs>
          <linearGradient id="ijl" x2="0" y2="1"><stop stop-color="#fdb44c" /><stop offset=".25" stop-color="#f5326e" /><stop offset=".45" stop-color="#8a45c4" /><stop offset=".65" stop-color="#2386f5" /><stop offset="1" stop-color="#2ba4f7" /></linearGradient>
          <linearGradient id="ijt"><stop stop-color="#fdc07c" /><stop offset=".25" stop-color="#f0307a" /><stop offset=".5" stop-color="#6a55d4" /><stop offset=".75" stop-color="#2a72f0" /><stop offset="1" stop-color="#35c8f2" /></linearGradient>
          <linearGradient id="ijr" x2="0" y2="1"><stop stop-color="#35c8f2" /><stop offset=".6" stop-color="#2a86f4" /><stop offset="1" stop-color="#7a63e8" /></linearGradient>
          <linearGradient id="ijb" x2="1" y2="1"><stop stop-color="#3d0f37" /><stop offset=".6" stop-color="#080208" /></linearGradient>
        </defs>
        <path d="M19 25v98.500L33 110V38z" fill="url(#ijl)" /><path d="M19 25h98.500L104 38H33z" fill="url(#ijt)" />
        <path d="M117.500 25v98.500L104 110V38z" fill="url(#ijr)" /><path d="M19 123.500h98.500L104 110H33z" fill="#2484f3" />
        <path d="M33 38h71v72H33z" fill="url(#ijb)" /><text x="41" y="74" class="ij">IJ</text><path d="M42 96h27v5H42z" fill="#fff" />
        <circle cx="68" cy="150" r="4" />
      </svg>
      <svg class="app-icon" viewBox="0 0 136 158">
        <rect x="17" y="22" width="102" height="103" rx="23" fill="#fff" />
        <g v-for="(c, i) in excelStrips" :key="i"><rect x="44" :y="39.500 + i * 17" width="29" height="17" :fill="c[0]" /><rect x="73" :y="39.500 + i * 17" width="29" height="17" :fill="c[1]" /></g>
        <rect x="26" y="54" width="39.500" height="38.500" rx="3" fill="#157a40" /><text x="45.500" y="82" class="office">X</text>
        <circle cx="68" cy="150" r="4" />
      </svg>
      <svg class="app-icon" viewBox="0 0 136 158">
        <defs><linearGradient id="el" x2="0" y2="1"><stop stop-color="#2bd2fb" /><stop offset="1" stop-color="#2163ee" /></linearGradient></defs>
        <circle cx="68.500" cy="74" r="56" fill="url(#el)" />
        <path d="M56 45c-16 3-30 14-31 26 0 12 5 24 8 34h16V94q7 3 11 0l2 11h14c5-8 9-20 11-30 5 2 3 10 1 17-1 7 5 12 9 11l3-4-7-8c0-6 3-10 4-13l8 4 1-3-6-3c0-14-4-31-12-35-4-3-9-3-12-4-5-5-10-8-13-8-3 10-3 22-2 30 5 5 12 7 16 11-9-3-16-8-21-14z" fill="#fff" />
        <circle cx="92.500" cy="61" r="2.800" fill="#2aa0f6" />
        <circle cx="68" cy="150" r="4" />
      </svg>
      <svg class="app-icon" viewBox="0 0 136 158">
        <rect x="16.500" y="22" width="104" height="104" rx="23" fill="#ff6c37" />
        <path d="M85 43c3-4 11-3 14 2 3 5 2 12-2 14-8 0-14-5-14-10zM82 50l7 10c-5 13-12 22-21 27L43 107l-8-1 3-7 25-21-10 1 22-26z" fill="#fff" />
        <path d="M90 51l7-4M84 57L58 82M87 61L64 86M61 75l7 9" stroke="#ff6c37" stroke-width="1.200" />
        <circle cx="68" cy="150" r="4" />
      </svg>
      <svg class="app-icon" viewBox="0 0 136 158">
        <path d="M14 20h109v108H14z" fill="#f5f5f5" stroke="#fff" stroke-width="2" />
        <path v-for="(c, i) in crosses" :key="i" :d="`M${c[0] - c[2]} ${c[1]}h${c[2] * 2}M${c[0]} ${c[1] - c[2]}v${c[2] * 2}`" stroke="#3b81b0" :stroke-width="c[3]" />
        <circle cx="68" cy="150" r="4" />
      </svg>
      <svg class="sep" viewBox="0 0 62 158"><path d="M32 20v118" stroke="#3a2070" stroke-width="2" /></svg>
      <svg class="app-icon" viewBox="0 0 136 158">
        <defs><linearGradient id="tr" x2="0" y2="1"><stop stop-color="#c9c7cf" /><stop offset=".5" stop-color="#cfcdd2" /><stop offset="1" stop-color="#efeff1" /></linearGradient></defs>
        <path d="M23 30l12 91q2 10 33 10t33-10l12-91q-45 20-90 0z" fill="url(#tr)" />
        <ellipse cx="68" cy="30" rx="45" ry="10" fill="#8b7fa6" stroke="#dcd8e4" stroke-width="1.500" />
        <path d="M30 30l8-11 10-4 6-2 9 9 14-7 8 8 12 1 6 8-8 8-30 3-26-3z" fill="#e8e8ea" />
        <path d="M36 23l9-5-3 9zM44 32l12-6 2 12zM77 19l11 12-8 6zM94 23l9 3-7 9zM62 36l4-10 5 13z" fill="#55525a" /><path d="M57 23l8 2-5 5z" fill="#3bbf9a" /><path d="M78 24l8 7-7 4z" fill="#b5532f" /><path d="M75 25l4-5 2 10z" fill="#3b62a8" />
        <path d="M56 54q16 2 36-16-4 24-20 22z" fill="#e6e6ea" opacity=".7" />
      </svg>
    </div>
  </div>
</template>

<style>
body { margin: 0; }
</style>

<style scoped>
* { box-sizing: border-box; }
.desktop {
  width: 2880px; height: 1800px; overflow: hidden; display: flex; flex-direction: column;
  font-family: Lato, "Liberation Sans", sans-serif; font-size: 25.5px; color: #333; line-height: 1;
  background:
    linear-gradient(90deg, #3a1590, #321399 50%, #2a1080) 0 0 / 100% 100px no-repeat,
    linear-gradient(90deg, #0d0326 0, #0d0428 46%, #160644 47%, #150640 64%, #4b0f6c 66%, #470e68 72%, #1c0742 78%, #16053c 84%, #190743 100%);
}
svg { display: block; flex: none; }
span, b { white-space: nowrap; }
h2, h3 { margin: 0; font-weight: 400; white-space: nowrap; width: max-content; }

.menubar {
  height: 50px; flex: none; display: flex; align-items: center; padding-left: 39px;
  font-family: Inter, "Liberation Sans", sans-serif; font-size: 25.5px; color: #f0ebf7; padding-bottom: 3px;
  background: linear-gradient(90deg, #4b1a8b, #40189b 25%, #3517a7 45%, #30159f 70%, #2c118b);
  border-bottom: 1px solid #25107c; text-shadow: 0 2px 4px rgba(0, 0, 0, .25);
}
.apple { margin-right: 41px; }
.app { margin-right: 41px; }
.menu { margin-right: 41.6px; }
.tray { margin: 1px 7px 0 auto; }
.clock.first { margin-right: 15px; }
.clock:last-child { margin-right: 37px; }

.window {
  height: 1580px; flex: none; display: flex; flex-direction: column; background: #f4f4f4;
  border-radius: 20px; overflow: hidden;
}
.titlebar {
  height: 57px; flex: none; display: flex; align-items: center; padding-left: 16px; gap: 16px;
  background: #efedf1; border-top: 2px solid #fafafc; border-bottom: 2px solid #d0ced2;
}
.light { width: 24px; height: 24px; border-radius: 50%; border: 1px solid rgba(0, 0, 0, .12); }
.red { background: #fe5f57; } .yellow { background: #febb3e; } .green { background: #33c748; }
.title {
  margin-left: 1057px; display: flex; align-items: center; gap: 9px; color: #4a484c; padding-bottom: 2px;
  font-family: Inter, "Liberation Sans", sans-serif; font-size: 25.5px;
}

.toolbar { height: 79px; flex: none; display: flex; align-items: center; background: #f5f5f5; }
.grp { box-sizing: content-box; border-right: 2px solid #d4d4d4; margin-right: -2px; }
.grp.open { border-right-color: transparent; }
.select {
  width: 195px; height: 46px; border: 2px solid #c8c8c8; border-radius: 4px; display: flex; align-items: center;
  padding-left: 14px; flex: none; color: #333; margin-top: -2px;
}
.select i { width: 2px; height: 42px; background: #e0e0e0; margin-left: auto; margin-right: 10px; }
.select svg { margin-right: 10px; }
.showme-icons { margin-left: 705px; }
.showme { margin-left: 4px; color: #000; }

.workspace { height: 1342px; flex: none; display: flex; }
.data { width: 420px; flex: none; background: #fff; border-top: 2px solid #d4d4d4; border-right: 2px solid #d4d4d4; }
.data-tabs { display: flex; height: 56px; }
.tab { display: flex; align-items: center; color: #333; }
.tab.active { width: 156px; padding: 0 0 5px 36px; color: #222; }
.analytics { flex: 1; background: #fafafa; border-left: 2px solid #d4d4d4; border-bottom: 2px solid #d4d4d4; padding-left: 24px; }
.analytics span { margin-bottom: 1px; }
.analytics svg { margin: 0 15px 5px auto; }
.sources { height: 102px; padding: 8px 22px 0; border-bottom: 2px solid #e6e6e6; }
.source { height: 40px; display: flex; align-items: center; padding-left: 18px; gap: 10px; }
.source span { margin-bottom: 1px; }
.source.on { background: #e5e5e5; }
.searchrow { display: flex; align-items: center; padding: 20px 0 0 16px; }
.search {
  width: 264px; height: 46px; border: 2px solid #c8c8c8; border-radius: 3px; display: flex; align-items: center;
  justify-content: space-between; padding: 0 12px 0 17px; color: #999;
}
.tables { display: inline-block; margin: 19px 0 0 36px; height: 40px; line-height: 26px; color: #000; vertical-align: top; }
.field { height: 42px; display: flex; align-items: center; color: #000; }
.fname { margin-bottom: 1px; }
.fi { width: 40px; margin: 0 20px 0 34px; }
.abc { font-size: 18.5px; color: #3f80a4; display: flex; justify-content: flex-end; }
.it { font-style: italic; }
.rule { height: 2px; background: #dcdcdc; margin: 1px 11px 1px 30px; }

.cards { width: 308px; margin-left: 12px; display: flex; flex-direction: column; gap: 12px; flex: none; }
.card { border: 2px solid #d4d4d4; background: #fafafa; padding: 16px 0 0 12px; }
.card h3 { font-size: 25.5px; height: 28px; }
.pages { height: 124px; } .filters { height: 202px; } .marks { height: 436px; }
.pill { height: 40px; border-radius: 20px; color: #fff; display: flex; align-items: center; padding: 0 24px 1px 21px; flex: none; }
.green.pill { background: #00b180; } .blue.pill { background: #4996b2; }
.filters .pill { width: 288px; margin-left: -4px; }
.filters .pill.green { margin-top: 20px; } .filters .pill.blue { margin-top: 6px; }
.marktype {
  width: 280px; height: 42px; margin-top: 26px; border: 2px solid #c8c8c8; border-radius: 3px;
  display: flex; align-items: center; font-size: 21.5px; padding-left: 24px; gap: 14px;
}
.marktype i { width: 2px; height: 38px; background: #e0e0e0; margin-left: auto; margin-right: -4px; }
.marktype svg:last-child { margin-right: 10px; }
.marktype svg:first-child { margin-bottom: 3px; }
.markgrid { display: grid; grid-template-columns: 86px 84px 86px; gap: 12px; margin-top: 12px; }
.mark {
  height: 84px; border: 2px solid #d4d4d4; display: flex; flex-direction: column; align-items: center;
  padding-top: 11px; gap: 13px; font-size: 21.5px; color: #222;
}
.encoding { display: flex; align-items: center; gap: 8px; margin: 18px 0 0 14px; }
.encoding .pill { width: 222px; }

.stage { margin-left: 12px; width: 2116px; display: flex; flex-direction: column; gap: 12px; flex: none; }
.shelf { height: 56px; flex: none; border: 2px solid #d4d4d4; background: #fafafa; display: flex; align-items: center; }
.shelf-name { width: 249px; height: 100%; border-right: 2px solid #d4d4d4; display: flex; align-items: center; padding-left: 12px; gap: 14px; }
.shelf-name svg { margin-bottom: 4px; }
.shelf .pill { width: 296px; margin: 0 0 0 5px; justify-content: space-between; }
.view { height: 1194px; border: 2px solid #d4d4d4; background: #17f1dd; flex: none; }
.view h2 { font-size: 42px; font-weight: 300; margin: 27px 0 0 20px; height: 42px; color: #333; }
.dim, .measure { display: flex; color: #333; font-weight: 700; align-items: flex-start; }
.dim { margin: 33px 0 0 38px; height: 32px; gap: 6px; }
.dim b { margin-top: 2px; }
.chart { display: flex; height: 938px; }
.rowlabels { width: 179px; padding: 0 11px 0 0; text-align: right; color: #666; flex: none; letter-spacing: -.7px; }
.rowlabels span { display: block; height: 40px; line-height: 40px; }
.plot { width: 1062px; position: relative; overflow: hidden; }
.gridlines { position: absolute; left: 0; top: 0; }
.bars { position: relative; padding-top: 6px; display: flex; flex-direction: column; gap: 10px; }
.bar { height: 30px; background: #f28e2b; flex: none; }
.bar.partial { width: 367px; height: 4px; }
.axisline { position: absolute; left: 0; top: 927px; }
.scroll { width: 34px; height: 928px; margin-left: 7px; background: #fafafa; padding: 6px 0 0 12px; }
.scroll i { display: block; width: 16px; height: 36px; border-radius: 8px; background: #7f7f7f; }
.axis { margin: 7px 0 0 169px; font-size: 25.5px; fill: #666; letter-spacing: -.5px; }
.measure { margin: 9px 0 0 672px; gap: 10px; }
.measure b { margin-top: 1px; }

.sheets { height: 62px; flex: none; display: flex; border-top: 2px solid #cbcbcb; border-bottom: 2px solid #cbcbcb; background: linear-gradient(#e7e7e7, #dfdfdf); color: #555; }
.st { display: flex; align-items: center; border-right: 2px solid #c6c6c6; flex: none; }
.source-tab { width: 262px; padding-left: 19px; gap: 12px; }
.source-tab svg { margin-bottom: 4px; }
.sheet { width: 114.1px; justify-content: center; padding-right: 3px; }
.sel { background: linear-gradient(#fafafa, #f4f4f4); font-weight: 700; color: #4a4a4a; padding: 0 0 2px; }
.dash { width: 207.9px; padding-left: 16px; gap: 9px; }
.dash svg, .story svg { margin-bottom: 3px; }
.story { width: 147.500px; padding-left: 17px; gap: 9px; }
.add { width: 63.500px; padding: 4px 0 0 19px; }
.status {
  height: 40px; flex: none; display: flex; align-items: center; padding-left: 24px; font-size: 20.5px; color: #000;
  background:
    linear-gradient(90deg, #ebebeb, rgba(235, 235, 235, 0) 14%, rgba(235, 235, 235, 0) 84%, #ebebeb 91%),
    linear-gradient(#e0e0e0, #cecece);
}
.status span { margin: 0 31px 2px 0; }
.status svg { margin-left: auto; }

.dock {
  width: 2312px; height: 158px; margin: 2px 0 0 285px; flex: none; display: flex; padding-left: 3px;
  border: 2px solid rgba(255, 255, 255, .18); border-radius: 46px; background-clip: border-box;
  background: linear-gradient(97deg, #5f5476 0, #61557a 18%, #67558f 30%, #6a5599 45%, #6b559b 58%, #8f55b8 66%, #9e52c8 71%, #9a54c2 79%, #7f55ad 86%, #6a5698 94%, #66558e);
}
.app-icon { width: 136px; height: 158px; margin-top: -2px; }
.sep { width: 61.500px; height: 158px; margin-top: -2px; }
.cal-month { font: 600 20px Inter, sans-serif; fill: #fff; text-anchor: middle; }
.cal-day { font: 300 63px Inter, sans-serif; fill: #222; text-anchor: middle; letter-spacing: -3px; }
.office { font: 700 29px "Open Sans", sans-serif; fill: #fff; text-anchor: middle; }
.ij { font: 700 38px "Liberation Mono", monospace; fill: #fff; letter-spacing: -4px; }
</style>
